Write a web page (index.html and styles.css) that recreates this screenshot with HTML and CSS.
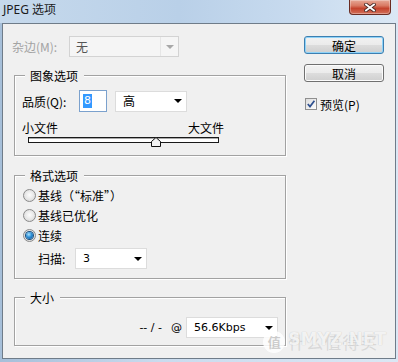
FILE: index.html
```html
<!DOCTYPE html>
<html lang="zh-CN">

<head>
  <meta charset="UTF-8" />
  <title>JPEG 选项</title>
  <link rel="stylesheet" href="styles.css">
</head>

<body>
  <div class="window">
    <div class="titlebar">
      <span class="title">JPEG 选项</span>
      <button class="close-btn" type="button" aria-label="关闭">
        <svg width="12" height="9" viewBox="0 0 12 9">
          <path d="M2 1.5 L10 7.5 M10 1.5 L2 7.5" stroke="#4a2a26" stroke-width="3.6" stroke-linecap="square" />
          <path d="M2 1.5 L10 7.5 M10 1.5 L2 7.5" stroke="#fff" stroke-width="1.8" stroke-linecap="square" />
        </svg>
      </button>
    </div>

    <div class="frame">
      <div class="client">
        <div class="left-col">
          <div class="matte-row">
            <span class="matte-label">杂边(M):</span>
            <div class="combo combo-disabled matte-combo">
              <span>无</span>
              <span class="drop"><i class="arrow"></i></span>
            </div>
          </div>

          <div class="group image-group">
            <span class="legend">图象选项</span>
            <div class="quality-row">
              <span class="q-label">品质(Q):</span>
              <div class="num-input"><span class="sel">8</span></div>
              <div class="combo q-combo">
                <span>高</span>
                <i class="arrow"></i>
              </div>
            </div>
            <div class="size-labels">
              <span>小文件</span>
              <span>大文件</span>
            </div>
            <div class="slider">
              <div class="track"></div>
              <svg class="thumb" width="10" height="10" viewBox="0 0 10 10">
                <polygon points="5,0.5 9.5,4.5 9.5,9.5 0.5,9.5 0.5,4.5" fill="#f4f4f4" stroke="#111" stroke-width="1" />
              </svg>
            </div>
          </div>

          <div class="group format-group">
            <span class="legend">格式选项</span>
            <label class="radio-row"><span class="radio"></span>基线（“标准”）</label>
            <label class="radio-row"><span class="radio"></span>基线已优化</label>
            <label class="radio-row"><span class="radio checked"></span>连续</label>
            <div class="scan-row">
              <span class="scan-label">扫描:</span>
              <div class="combo scan-combo">
                <span class="num">3</span>
                <i class="arrow"></i>
              </div>
            </div>
          </div>

          <div class="group size-group">
            <span class="legend">大小</span>
            <div class="speed-row">
              <span class="num">-- / -</span>
              <span class="num at">@</span>
              <div class="combo speed-combo">
                <span class="num">56.6Kbps</span>
                <i class="arrow"></i>
              </div>
            </div>
          </div>
        </div>

        <div class="right-col">
          <button class="btn btn-default" type="button">确定</button>
          <button class="btn" type="button">取消</button>
          <label class="check-row">
            <span class="checkbox">
              <svg width="10" height="10" viewBox="0 0 10 10">
                <path d="M1.8 5 L4 7.6 L8.4 1.8" fill="none" stroke="#2d4f8f" stroke-width="1.7" />
              </svg>
            </span>
            预览(P)
          </label>
        </div>
      </div>
    </div>

    <div class="watermark">
      <span class="wm-mark">值</span>
      <span class="wm-text">
        <span class="wm-cn">什么值得买</span>
        <span class="wm-en">SMYZ.NET</span>
      </span>
    </div>
  </div>
</body>

</html>
```

FILE: styles.css
```css
* {
  box-sizing: border-box;
}

body {
  margin: 0;
  font-family: "Noto Sans CJK SC", sans-serif;
  font-size: 12px;
  color: #000;
  background: #dde6ef;
}

.window {
  position: relative;
  width: 398px;
  height: 362px;
  display: flex;
  flex-direction: column;
  overflow: hidden;
  background: linear-gradient(90deg, #a6bfd9, #c9dbee 40%, #dbe7f4);
}

.titlebar {
  height: 23px;
  display: flex;
  justify-content: space-between;
  align-items: flex-start;
  padding-left: 3px;
  background: linear-gradient(90deg, #c6d9ec 0%, #b9d0e8 45%, #c8dbef 75%, #dbe8f5 100%);
}

.title {
  margin-top: 2px;
  font-family: "Noto Sans", "Noto Sans CJK SC", sans-serif;
  font-size: 12px;
  line-height: 16px;
  color: #1b1b1b;
}

.close-btn {
  width: 42px;
  height: 15px;
  margin-right: 7px;
  padding: 0;
  display: flex;
  align-items: center;
  justify-content: center;
  border: 1px solid #6a2c22;
  border-top: none;
  border-radius: 0 0 4px 4px;
  background: linear-gradient(#e6a896 0%, #d97a64 40%, #c4432d 60%, #d2715a 100%);
  box-shadow: inset 0 0 0 1px rgba(255, 255, 255, 0.3);
}

.frame {
  flex: 1;
  display: flex;
  padding: 0 2px 3px;
}

.client {
  flex: 1;
  display: flex;
  padding: 12px 0 0 9px;
  border: 1px solid #6f7c89;
  background: #f0f0f0;
}

.left-col {
  width: 274px;
}

/* combos */
.combo {
  height: 21px;
  display: flex;
  align-items: center;
  padding-left: 7px;
  border: 1px solid #dcdcdc;
  background: #fff;
  line-height: 14px;
}

.arrow {
  width: 0;
  height: 0;
  margin-left: auto;
  margin-right: 4px;
  border-left: 4px solid transparent;
  border-right: 4px solid transparent;
  border-top: 4px solid #000;
}

.num {
  font-family: "DejaVu Sans", sans-serif;
  font-size: 11px;
}

.combo-disabled {
  background: #f5f5f5;
  border-color: #d3d3d3;
  color: #555;
}

.combo-disabled .drop {
  margin-left: auto;
  width: 18px;
  height: 100%;
  display: flex;
  align-items: center;
  justify-content: center;
  border-left: 1px solid #e6e6e6;
}

.combo-disabled .arrow {
  margin: 0;
  border-top-color: #a8a8a8;
}

.matte-row {
  height: 21px;
  display: flex;
  align-items: center;
}

.matte-label {
  width: 57px;
  color: #a3a3a3;
}

.matte-combo {
  width: 110px;
  padding-left: 6px;
}

/* group boxes */
.group {
  position: relative;
  width: 272px;
  margin-left: 2px;
  border: 1px solid #a2a2a2;
  box-shadow: inset 1px 1px 0 #fff, 1px 1px 0 #fff;
}

.legend {
  position: absolute;
  top: -8px;
  left: 10px;
  padding: 0 6px 0 5px;
  line-height: 15px;
  background: #f0f0f0;
}

.image-group {
  height: 81px;
  margin-top: 18px;
  padding: 14px 0 0 7px;
}

.quality-row {
  height: 22px;
  display: flex;
  align-items: center;
}

.q-label {
  width: 57px;
}

.num-input {
  width: 28px;
  height: 22px;
  display: flex;
  align-items: center;
  padding-left: 3px;
  border: 1px solid #7ba1cd;
  background: #fff;
}

.sel {
  padding: 0 1px;
  line-height: 14px;
  font-family: "DejaVu Sans", sans-serif;
  font-size: 11px;
  color: #fff;
  background: #3399ff;
}

.q-combo {
  width: 72px;
  margin-left: 8px;
}

.size-labels {
  width: 202px;
  margin-top: 9px;
  display: flex;
  justify-content: space-between;
  line-height: 14px;
}

.slider {
  position: relative;
  width: 191px;
  height: 10px;
  margin: 2px 0 0 6px;
}

.track {
  height: 6px;
  border: 1px solid #1a1a1a;
  background: #fff;
  box-shadow: inset 0 1px 0 #a8a8a8;
}

.thumb {
  position: absolute;
  top: 0;
  left: 123px;
}

.format-group {
  height: 104px;
  margin-top: 19px;
  padding: 9px 0 0 8px;
}

.radio-row {
  height: 20px;
  display: flex;
  align-items: center;
  gap: 2px;
}

.radio {
  width: 13px;
  height: 13px;
  display: flex;
  align-items: center;
  justify-content: center;
  border: 1px solid #8a8a8a;
  border-radius: 50%;
  background: radial-gradient(circle at 50% 45%, #fdfdfd 0%, #e6e6e6 55%, #d0d0d0 100%);
}

.radio.checked::after {
  content: "";
  width: 7px;
  height: 7px;
  border-radius: 50%;
  background: radial-gradient(circle at 40% 35%, #aee5ff 0%, #2d8fd6 45%, #0d4e8f 100%);
  box-shadow: 0 0 0 1px #1c4f7d;
}

.scan-row {
  margin-top: 3px;
  padding-left: 15px;
  display: flex;
  align-items: center;
}

.scan-label {
  width: 37px;
}

.scan-combo {
  width: 72px;
}

.size-group {
  height: 49px;
  margin-top: 18px;
  padding: 19px 7px 0 0;
  display: flex;
  justify-content: flex-end;
  align-items: flex-start;
}

.speed-row {
  display: flex;
  align-items: center;
}

.at {
  margin: 0 4px 0 9px;
}

.speed-combo {
  width: 92px;
}

/* buttons */
.right-col {
  width: 80px;
  margin-left: 18px;
}

.btn {
  display: block;
  width: 80px;
  height: 18px;
  padding: 0;
  font: inherit;
  line-height: 15px;
  color: #000;
  border: 1px solid #707070;
  border-radius: 3px;
  background: linear-gradient(#f2f2f2 0%, #ebebeb 50%, #dddddd 50%, #cfcfcf 100%);
  box-shadow: inset 0 0 0 1px #fbfbfb;
}

.btn + .btn {
  margin-top: 10px;
}

.btn-default {
  border-color: #3c7fb1;
  box-shadow: inset 0 0 0 1px #8fd3f8;
}

.check-row {
  height: 14px;
  margin: 15px 0 0 1px;
  display: flex;
  align-items: center;
  gap: 3px;
}

.checkbox {
  width: 12px;
  height: 12px;
  display: flex;
  align-items: center;
  justify-content: center;
  border: 1px solid #8f8f8f;
  background: linear-gradient(135deg, #dcdcdc, #fdfdfd);
}

/* watermark over the corner */
.watermark {
  position: absolute;
  right: 12px;
  bottom: 8px;
  display: flex;
  align-items: center;
  gap: 3px;
  opacity: 0.85;
}

.wm-mark {
  width: 22px;
  height: 22px;
  display: flex;
  align-items: center;
  justify-content: center;
  border-radius: 50%;
  font-size: 13px;
  font-weight: bold;
  color: #c8c8c8;
  background: #fff;
}

.wm-text {
  display: grid;
}

.wm-cn,
.wm-en {
  grid-area: 1 / 1;
}

.wm-cn {
  font-size: 17px;
  letter-spacing: 1px;
  color: rgba(160, 160, 160, 0.35);
}

.wm-en {
  font-family: "DejaVu Sans", sans-serif;
  font-size: 17px;
  font-weight: bold;
  color: rgba(255, 255, 255, 0.85);
  text-shadow: 0 0 1px rgba(0, 0, 0, 0.25);
}
```
